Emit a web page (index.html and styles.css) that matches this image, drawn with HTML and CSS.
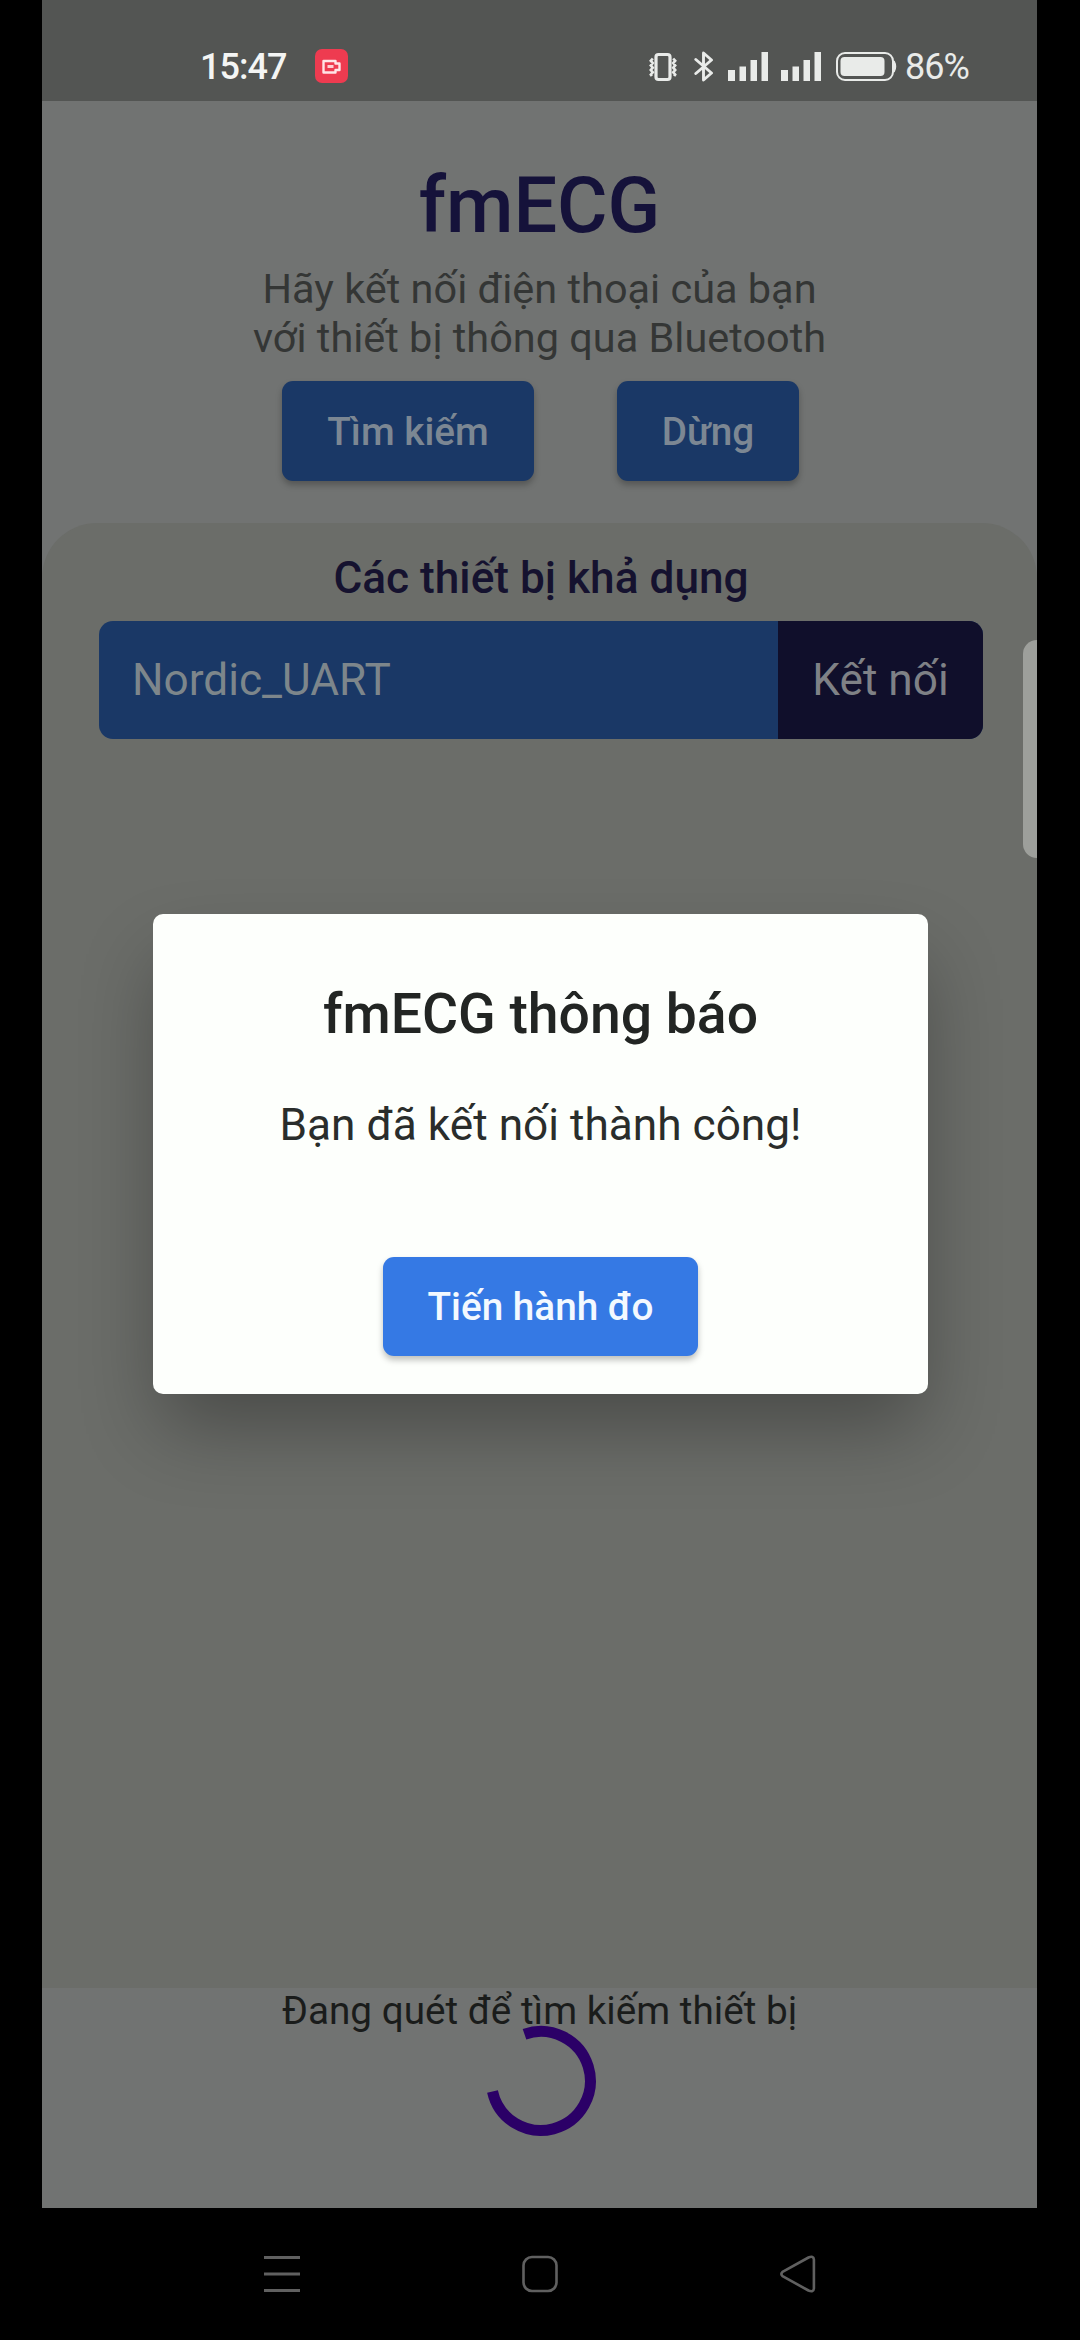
FILE: index.html
```html
<!DOCTYPE html>
<html lang="vi">
<head>
<meta charset="utf-8">
<title>fmECG</title>
<link rel="stylesheet" href="styles.css">
</head>
<body>
<div class="phone">
  <div class="screen">
    <header class="status">
      <span class="clock">15:47</span>
      <svg class="rec" width="33" height="34" viewBox="0 0 33 34"><rect width="33" height="34" rx="7" fill="#ee3b50"/><path d="M8.500 12h12v2.500h4v6.500h-4v2.500h-12z" fill="none" stroke="#ffe4e6" stroke-width="2.400" stroke-linejoin="round"/><rect x="12.500" y="16" width="6" height="3" fill="#ffd0d4"/></svg>
      <span class="spacer"></span>
      <svg class="vibrate" width="30" height="30" viewBox="0 0 30 30" fill="none" stroke="#e9ebe9"><rect x="8" y="2.500" width="14" height="25" rx="2.500" stroke-width="3.200"/><path d="M4.800 6.500l-2 2.300 2 2.300-2 2.300 2 2.300-2 2.300 2 2.300-2 2.300 1 1.500M25.200 6.500l2 2.300-2 2.300 2 2.300-2 2.300 2 2.300-2 2.300 2 2.300-1 1.500" stroke-width="2.600"/></svg>
      <svg class="bt" width="20" height="31" viewBox="0 0 20 31" fill="none" stroke="#e9ebe9" stroke-width="2.900" stroke-linejoin="round" stroke-linecap="round"><path d="M1.800 8.500L17.500 22 9.500 29V2l8 7L1.800 22.500"/></svg>
      <svg class="signal" width="41" height="30" viewBox="0 0 41 30" fill="#e9ebe9"><path d="M0 18h7v11H0zM11.500 14.500h6.500V29h-6.500zM22.500 8H29v21h-6.500zM33.500 0H40v29h-6.500z"/></svg>
      <svg class="signal" width="41" height="30" viewBox="0 0 41 30" fill="#e9ebe9"><path d="M0 18h7v11H0zM11.500 14.500h6.500V29h-6.500zM22.500 8H29v21h-6.500zM33.500 0H40v29h-6.500z"/></svg>
      <svg class="battery" width="61" height="29" viewBox="0 0 61 29"><rect x="1" y="1" width="56" height="27" rx="8" fill="none" stroke="#e9ebe9" stroke-width="2"/><path d="M58 9q3 5.500 0 11z" fill="#e9ebe9" stroke="#e9ebe9" stroke-width="1.500"/><rect x="4.500" y="5" width="44" height="19" rx="4" fill="#e9ebe9"/></svg>
      <span class="percent">86%</span>
    </header>

    <main class="page">
      <h1 class="title">fmECG</h1>
      <p class="intro">Hãy kết nối điện thoại của bạn<br>với thiết bị thông qua Bluetooth</p>
      <div class="actions">
        <button class="btn btn-search">Tìm kiếm</button>
        <button class="btn btn-stop">Dừng</button>
      </div>
      <section class="devices">
        <h2 class="devices-title">Các thiết bị khả dụng</h2>
        <div class="device">
          <span class="device-name">Nordic_UART</span>
          <span class="device-connect">Kết nối</span>
        </div>
      </section>
      <footer class="scan">
        <p class="scan-text">Đang quét để tìm kiếm thiết bị</p>
        <svg class="spinner" width="112" height="112" viewBox="0 0 112 112"><path d="M39.500 9.200A49.500 49.500 0 1 1 7.500 66.500" fill="none" stroke="#2b0067" stroke-width="11"/></svg>
      </footer>
    </main>

    <div class="edge-handle"></div>
    <div class="dialog">
      <h3 class="dialog-title">fmECG thông báo</h3>
      <p class="dialog-text">Bạn đã kết nối thành công!</p>
      <button class="btn btn-go">Tiến hành đo</button>
    </div>
  </div>

  <nav class="nav">
    <svg width="36" height="38" viewBox="0 0 36 38" stroke="#606060" stroke-width="3"><path d="M0 2.500h36M0 19h36M0 35.500h36"/></svg>
    <svg width="36" height="38" viewBox="0 0 36 38" fill="none" stroke="#606060" stroke-width="2.600"><rect x="1.500" y="2" width="33" height="34" rx="8.500"/></svg>
    <svg width="36" height="38" viewBox="0 0 36 38" fill="none" stroke="#606060" stroke-width="2.600" stroke-linejoin="round"><path d="M2.500 16.800L28.500 2.500Q33.600 .4 33.900 4.500V33.500Q33.600 37.600 28.500 35.500L2.500 21.200Q.3 19 2.500 16.800z"/></svg>
  </nav>
</div>
</body>
</html>
```
FILE: styles.css
```css
* { box-sizing: border-box; }
body { margin: 0; background: #000; font-family: Roboto, sans-serif; }
h1, h2, h3, p { margin: 0; }

.phone { width: 1080px; height: 2340px; background: #000; display: flex; flex-direction: column; overflow: hidden; }
.screen { position: relative; width: 995px; height: 2208px; margin-left: 42px; background: #717372; display: flex; flex-direction: column; overflow: hidden; }

.status { height: 101px; background: #535553; display: flex; align-items: flex-start; padding: 46px 68px 0 158px; color: #f4f5f4; }
.clock { font-size: 36px; font-weight: 500; line-height: 42px; letter-spacing: -1px; width: 115px; }
.rec { margin-top: 3px; }
.spacer { flex: 1; }
.vibrate { margin: 6px 16px 0 0; }
.bt { margin: 5px 14px 0 0; }
.signal { margin: 6px 12px 0 0; }
.battery { margin: 6px 8px 0 2px; }
.percent { font-size: 36px; line-height: 42px; letter-spacing: -1px; color: #e9ebe9; width: 64px; }

.page { flex: 1; display: flex; flex-direction: column; align-items: center; padding-top: 59px; }
.title { font-size: 77.400px; font-weight: 500; line-height: 91px; color: #15123a; }
.intro { margin-top: 14px; text-align: center; font-size: 41.460px; line-height: 48.500px; color: #343635; }

.actions { display: flex; gap: 83px; margin: 19px 0 0 2px; }
.btn { border: 0; border-radius: 11px; height: 100px; padding: 0; font: 500 38.700px/45px Roboto, sans-serif; background: #1a3866; color: #7c8793; box-shadow: 0 4px 6px rgba(0, 0, 0, .25); }
.btn-search { width: 252px; }
.btn-stop { width: 182px; }

.devices { width: 100%; height: 1465px; margin-top: 42px; padding: 29px 54px 0 57px; background: #6b6d69; border-radius: 55px 55px 0 0; }
.devices-title { text-align: center; font-size: 44.200px; font-weight: 500; line-height: 52px; color: #15122f; }
.device { display: flex; height: 118px; margin-top: 17px; border-radius: 14px; overflow: hidden; font-size: 44.200px; line-height: 118px; color: #7d868b; background: #1a3866; }
.device-name { flex: 1; padding-left: 33px; }
.device-connect { width: 205px; text-align: center; background: #100f2b; color: #7f8186; }

.scan { display: flex; flex-direction: column; align-items: center; }
.scan-text { font-size: 38.700px; line-height: 45px; color: #1a1c1b; }
.spinner { margin: -8px 0 0 2px; }

/* System side-panel handle floating over the app */
.edge-handle { position: absolute; right: 0; top: 640px; width: 14px; height: 218px; background: #9d9f9b; border-radius: 14px 0 0 14px; }

.dialog { position: absolute; left: 111px; top: 914px; width: 775px; height: 480px; border-radius: 10px; background: #fdfffc; display: flex; flex-direction: column; align-items: center; padding-top: 68px; box-shadow: 0 40px 80px -8px rgba(0, 0, 0, .32); color: #222523; }
.dialog-title { font-size: 55.300px; font-weight: 500; line-height: 65px; }
.dialog-text { margin-top: 52px; font-size: 44.200px; line-height: 52px; color: #2a2d2b; }
.btn-go { height: 99px; margin-top: 106px; width: 315px; background: #3579e4; color: #f3f9ff; }

.nav { height: 132px; padding: 0 264px; display: flex; align-items: center; justify-content: space-between; }
```
